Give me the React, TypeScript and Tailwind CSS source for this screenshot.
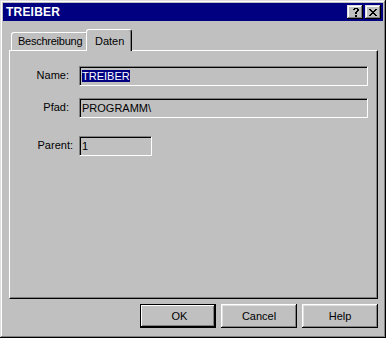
import React from "react";

const bevelOut =
  "shadow-[inset_-1px_-1px_0_#000,inset_1px_1px_0_#dfdfdf,inset_-2px_-2px_0_#808080,inset_2px_2px_0_#fff]";
const buttonBevel =
  "shadow-[inset_-1px_-1px_0_#000,inset_1px_1px_0_#fff,inset_-2px_-2px_0_#808080,inset_2px_2px_0_#dfdfdf]";

function HelpGlyph() {
  // pixel question mark, 6x9
  const px = [
    [1, 0], [2, 0], [3, 0], [4, 0],
    [0, 1], [1, 1], [4, 1], [5, 1],
    [4, 2], [5, 2],
    [3, 3], [4, 3],
    [2, 4], [3, 4],
    [2, 5], [3, 5],
    [2, 7], [3, 7],
    [2, 8], [3, 8],
  ];
  return (
    <svg width="6" height="9" viewBox="0 0 6 9" shapeRendering="crispEdges">
      {px.map(([x, y]) => (
        <rect key={`${x}-${y}`} x={x} y={y} width="1" height="1" fill="#000" />
      ))}
    </svg>
  );
}

function CloseGlyph() {
  const rows = [
    "XX....XX",
    ".XX..XX.",
    "..XXXX..",
    "...XX...",
    "..XXXX..",
    ".XX..XX.",
    "XX....XX",
  ];
  return (
    <svg width="8" height="7" viewBox="0 0 8 7" shapeRendering="crispEdges">
      {rows.map((row, y) =>
        row.split("").map((c, x) =>
          c === "X" ? (
            <rect key={`${x}-${y}`} x={x} y={y} width="1" height="1" fill="#000" />
          ) : null
        )
      )}
    </svg>
  );
}

function Field({
  label,
  value,
  width,
  labelClass,
  selected,
}: {
  label: string;
  value: string;
  width: string;
  labelClass: string;
  selected?: boolean;
}) {
  return (
    <div className="flex items-center">
      <div className={`${labelClass} text-right pb-[3px] leading-[14px]`}>{label}</div>
      <div
        className={`${width} h-[20px] flex items-center pl-[2px] border border-t-[#808080] border-l-[#808080] border-b-white border-r-white shadow-[inset_1px_1px_0_#000] bg-[#c0c0c0]`}
      >
        {selected ? (
          <span className="inline-block h-[12px] leading-[12px] bg-[#000080] text-white">
            {value}
          </span>
        ) : (
          <span className="leading-[14px]">{value}</span>
        )}
      </div>
    </div>
  );
}

export default function App() {
  return (
    <div
      className={`w-[386px] h-[338px] bg-[#c0c0c0] p-[3px] flex flex-col text-[11px] text-black font-['Liberation_Sans',Arial,sans-serif] ${bevelOut}`}
    >
      {/* title bar */}
      <div className="h-[18px] bg-[#000080] flex items-center pl-[3px] pr-[2px]">
        <span className="text-white font-bold text-[12px] leading-[14px] tracking-[0.2px]">TREIBER</span>
        <div className="ml-auto flex gap-[2px]">
          <div className={`w-[16px] h-[14px] bg-[#c0c0c0] flex items-center justify-center pl-[1px] ${bevelOut}`}>
            <HelpGlyph />
          </div>
          <div className={`w-[16px] h-[14px] bg-[#c0c0c0] flex items-center justify-center pt-[1px] ${bevelOut}`}>
            <CloseGlyph />
          </div>
        </div>
      </div>

      <div className="mt-[8px] pl-[6px] pr-[5px] flex flex-col">
        {/* tabs */}
        <div className="h-[21px] flex items-end pl-[2px]">
          <div className="w-[77px] h-[18px] border-l border-t border-r border-l-white border-t-white border-r-black rounded-t-[3px] shadow-[inset_-1px_0_0_#808080] flex items-center pl-[6px] pb-[1px] tracking-[-0.25px]">
            Beschreibung
          </div>
          <div className="relative z-10 -ml-[2px] -mb-[1px] w-[46px] h-[22px] bg-[#c0c0c0] border-l border-t border-r border-l-white border-t-white border-r-black rounded-t-[3px] shadow-[inset_-1px_0_0_#808080] flex items-start pt-[3px] pl-[8px]">
            Daten
          </div>
        </div>

        {/* panel */}
        <div className="h-[249px] border border-t-white border-l-white border-r-black border-b-black shadow-[inset_-1px_-1px_0_#808080] pt-[15px] flex flex-col">
          <Field label="Name:" value="TREIBER" width="w-[289px]" labelClass="w-[59px] mr-[10px]" selected />
          <div className="mt-[12px]">
            <Field label="Pfad:" value="PROGRAMM\" width="w-[289px]" labelClass="w-[59px] mr-[10px]" />
          </div>
          <div className="mt-[18px]">
            <Field label="Parent:" value="1" width="w-[73px]" labelClass="w-[63px] mr-[6px]" />
          </div>
        </div>

        {/* buttons */}
        <div className="mt-[5px] flex justify-end gap-[5px]">
          <button
            type="button"
            className="w-[76px] h-[24px] bg-[#c0c0c0] border border-black shadow-[inset_-1px_-1px_0_#000,inset_1px_1px_0_#fff,inset_-2px_-2px_0_#808080] flex items-center justify-center pl-[3px]"
          >
            OK
          </button>
          <button
            type="button"
            className={`w-[76px] h-[24px] bg-[#c0c0c0] flex items-center justify-center ${buttonBevel}`}
          >
            Cancel
          </button>
          <button
            type="button"
            className={`w-[76px] h-[24px] bg-[#c0c0c0] flex items-center justify-center ${buttonBevel}`}
          >
            Help
          </button>
        </div>
      </div>
    </div>
  );
}
